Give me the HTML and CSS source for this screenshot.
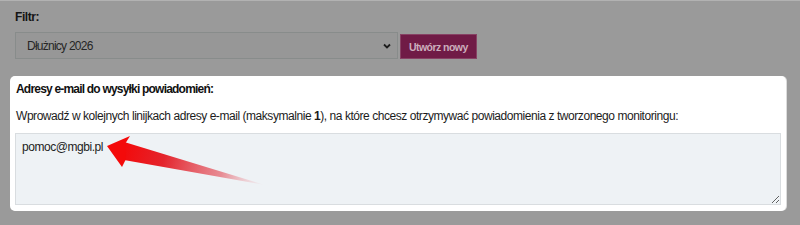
FILE: index.html
```html
<!DOCTYPE html>
<html>
<head>
    <meta charset="UTF-8">
    <title>Monitoring - powiadomienia</title>
    <link rel="stylesheet" href="styles.css">
</head>
<body>
<div class="page">
    <div class="filter">
        <div class="filter-label">Filtr:</div>
        <div class="filter-row">
            <div class="select">
                <span>Dłużnicy 2026</span>
                <svg class="chevron" width="8" height="6" viewBox="0 0 8 6"><path d="M1 1.5 L4 4.5 L7 1.5" fill="none" stroke="#1c1c1c" stroke-width="1.8"/></svg>
            </div>
            <button class="btn-new">Utwórz nowy</button>
        </div>
    </div>

    <div class="card">
        <div class="card-title">Adresy e-mail do wysyłki powiadomień:</div>
        <p class="card-text">Wprowadź w kolejnych linijkach adresy e-mail (maksymalnie <b>1</b>), na które chcesz otrzymywać powiadomienia z tworzonego monitoringu:</p>
        <div class="emails">
            <textarea class="emails-input">pomoc@mgbi.pl</textarea>
            <!-- strzałka z zrzutu ekranu -->
            <svg class="arrow" width="260" height="72" viewBox="0 0 260 72">
                <defs>
                    <linearGradient id="tail" gradientUnits="userSpaceOnUse" x1="105" y1="16" x2="250" y2="52">
                        <stop offset="0" stop-color="#f40808"/>
                        <stop offset="0.3" stop-color="#e4242c"/>
                        <stop offset="0.7" stop-color="#e4606a" stop-opacity="0.7"/>
                        <stop offset="1" stop-color="#f0a0a8" stop-opacity="0"/>
                    </linearGradient>
                </defs>
                <path d="M106 8 L250 52 L109 27 Z" fill="url(#tail)"/>
                <path d="M92 13 L115 3 L110 11 L111 26 L107 34 Z" fill="#f40a0a"/>
            </svg>
        </div>
    </div>
</div>
</body>
</html>
```

FILE: styles.css
```css
html, body {
    margin: 0;
    padding: 0;
    background-color: #9a9a9a;
    font-family: "Liberation Sans", Arial, sans-serif;
    font-size: 12px;
    letter-spacing: -0.45px;
    color: #151515;
}

.page {
    border-top: 1px solid #b2b2b2;
    width: 800px;
    height: 224px;
}

.filter {
    padding: 9px 15px 0;
}

.filter-label {
    font-weight: bold;
    line-height: 14px;
}

.filter-row {
    display: flex;
    align-items: flex-end;
    margin-top: 8px;
}

.select {
    display: flex;
    align-items: center;
    justify-content: space-between;
    box-sizing: border-box;
    width: 383px;
    height: 27px;
    padding: 0 6px 0 11px;
    background-color: #979797;
    border: 1px solid #888c8b;
    color: #262626;
    font-size: 12px;
    letter-spacing: -0.75px;
}

.btn-new {
    box-sizing: border-box;
    height: 25px;
    margin-left: 2px;
    padding: 0 8px;
    background-color: #701b46;
    border: 1px solid #874264;
    color: #cbaebd;
    font-family: "Liberation Sans", Arial, sans-serif;
    font-size: 10.5px;
    font-weight: bold;
    letter-spacing: -0.55px;
}

.card {
    box-sizing: border-box;
    width: 776px;
    height: 135px;
    margin: 17px 0 0 10px;
    padding: 6px 5px 0;
    background-color: #fff;
    border-radius: 5px;
    box-shadow: 1px 0 0 #dcdcdc;
}

.card-title {
    font-weight: bold;
    color: #111;
    line-height: 14px;
    padding-left: 1px;
    letter-spacing: -0.8px;
}

.card-text {
    margin: 13px 0 0 1px;
    line-height: 14px;
    color: #1c1c1c;
}

.emails {
    position: relative;
    margin-top: 10px;
}

.emails-input {
    display: block;
    box-sizing: border-box;
    width: 766px;
    height: 72px;
    margin: 0;
    padding: 6px 6px;
    background-color: #eef2f5;
    border: 1px solid #d9dde0;
    border-radius: 0;
    font-family: "Liberation Sans", Arial, sans-serif;
    font-size: 12px;
    letter-spacing: -0.45px;
    color: #222;
    resize: vertical;
    outline: none;
}

.arrow {
    position: absolute;
    left: 0;
    top: 0;
}
```
